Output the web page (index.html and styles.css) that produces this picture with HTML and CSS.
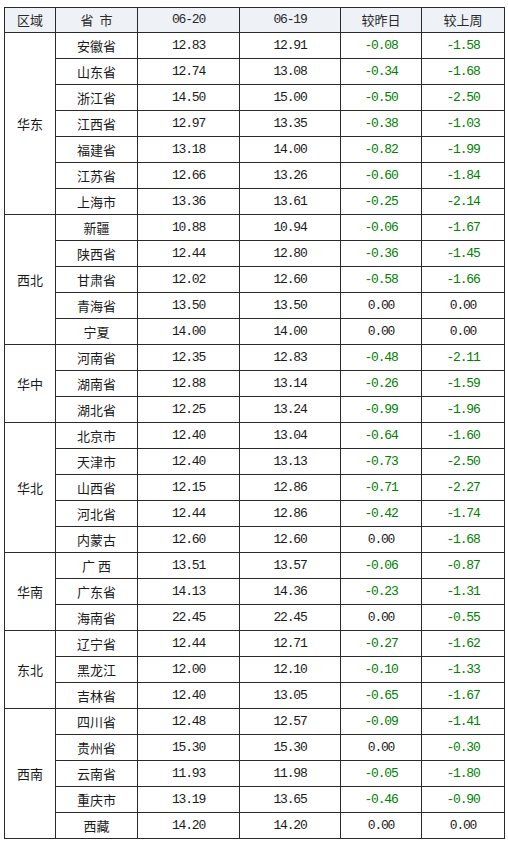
FILE: index.html
```html
<!DOCTYPE html>
<html lang="zh-CN">
<head>
<meta charset="utf-8">
<title>价格表</title>
<link rel="stylesheet" href="styles.css">
</head>
<body>
<table class="price">
<colgroup>
<col class="c-region"><col class="c-prov"><col class="c-d1"><col class="c-d2"><col class="c-ch1"><col class="c-ch2">
</colgroup>
<thead>
<tr><th>区域</th><th>省&nbsp;&nbsp;市</th><th class="num">06-20</th><th class="num">06-19</th><th>较昨日</th><th>较上周</th></tr>
</thead>
<tbody>
<tr><td rowspan="7" class="region">华东</td><td>安徽省</td><td class="num">12.83</td><td class="num">12.91</td><td class="num down">-0.08</td><td class="num down">-1.58</td></tr>
<tr><td>山东省</td><td class="num">12.74</td><td class="num">13.08</td><td class="num down">-0.34</td><td class="num down">-1.68</td></tr>
<tr><td>浙江省</td><td class="num">14.50</td><td class="num">15.00</td><td class="num down">-0.50</td><td class="num down">-2.50</td></tr>
<tr><td>江西省</td><td class="num">12.97</td><td class="num">13.35</td><td class="num down">-0.38</td><td class="num down">-1.03</td></tr>
<tr><td>福建省</td><td class="num">13.18</td><td class="num">14.00</td><td class="num down">-0.82</td><td class="num down">-1.99</td></tr>
<tr><td>江苏省</td><td class="num">12.66</td><td class="num">13.26</td><td class="num down">-0.60</td><td class="num down">-1.84</td></tr>
<tr><td>上海市</td><td class="num">13.36</td><td class="num">13.61</td><td class="num down">-0.25</td><td class="num down">-2.14</td></tr>

<tr><td rowspan="5" class="region">西北</td><td>新疆</td><td class="num">10.88</td><td class="num">10.94</td><td class="num down">-0.06</td><td class="num down">-1.67</td></tr>
<tr><td>陕西省</td><td class="num">12.44</td><td class="num">12.80</td><td class="num down">-0.36</td><td class="num down">-1.45</td></tr>
<tr><td>甘肃省</td><td class="num">12.02</td><td class="num">12.60</td><td class="num down">-0.58</td><td class="num down">-1.66</td></tr>
<tr><td>青海省</td><td class="num">13.50</td><td class="num">13.50</td><td class="num">0.00</td><td class="num">0.00</td></tr>
<tr><td>宁夏</td><td class="num">14.00</td><td class="num">14.00</td><td class="num">0.00</td><td class="num">0.00</td></tr>

<tr><td rowspan="3" class="region">华中</td><td>河南省</td><td class="num">12.35</td><td class="num">12.83</td><td class="num down">-0.48</td><td class="num down">-2.11</td></tr>
<tr><td>湖南省</td><td class="num">12.88</td><td class="num">13.14</td><td class="num down">-0.26</td><td class="num down">-1.59</td></tr>
<tr><td>湖北省</td><td class="num">12.25</td><td class="num">13.24</td><td class="num down">-0.99</td><td class="num down">-1.96</td></tr>

<tr><td rowspan="5" class="region">华北</td><td>北京市</td><td class="num">12.40</td><td class="num">13.04</td><td class="num down">-0.64</td><td class="num down">-1.60</td></tr>
<tr><td>天津市</td><td class="num">12.40</td><td class="num">13.13</td><td class="num down">-0.73</td><td class="num down">-2.50</td></tr>
<tr><td>山西省</td><td class="num">12.15</td><td class="num">12.86</td><td class="num down">-0.71</td><td class="num down">-2.27</td></tr>
<tr><td>河北省</td><td class="num">12.44</td><td class="num">12.86</td><td class="num down">-0.42</td><td class="num down">-1.74</td></tr>
<tr><td>内蒙古</td><td class="num">12.60</td><td class="num">12.60</td><td class="num">0.00</td><td class="num down">-1.68</td></tr>

<tr><td rowspan="3" class="region">华南</td><td>广&nbsp;西</td><td class="num">13.51</td><td class="num">13.57</td><td class="num down">-0.06</td><td class="num down">-0.87</td></tr>
<tr><td>广东省</td><td class="num">14.13</td><td class="num">14.36</td><td class="num down">-0.23</td><td class="num down">-1.31</td></tr>
<tr><td>海南省</td><td class="num">22.45</td><td class="num">22.45</td><td class="num">0.00</td><td class="num down">-0.55</td></tr>

<tr><td rowspan="3" class="region">东北</td><td>辽宁省</td><td class="num">12.44</td><td class="num">12.71</td><td class="num down">-0.27</td><td class="num down">-1.62</td></tr>
<tr><td>黑龙江</td><td class="num">12.00</td><td class="num">12.10</td><td class="num down">-0.10</td><td class="num down">-1.33</td></tr>
<tr><td>吉林省</td><td class="num">12.40</td><td class="num">13.05</td><td class="num down">-0.65</td><td class="num down">-1.67</td></tr>

<tr><td rowspan="5" class="region">西南</td><td>四川省</td><td class="num">12.48</td><td class="num">12.57</td><td class="num down">-0.09</td><td class="num down">-1.41</td></tr>
<tr><td>贵州省</td><td class="num">15.30</td><td class="num">15.30</td><td class="num">0.00</td><td class="num down">-0.30</td></tr>
<tr><td>云南省</td><td class="num">11.93</td><td class="num">11.98</td><td class="num down">-0.05</td><td class="num down">-1.80</td></tr>
<tr><td>重庆市</td><td class="num">13.19</td><td class="num">13.65</td><td class="num down">-0.46</td><td class="num down">-0.90</td></tr>
<tr><td>西藏</td><td class="num">14.20</td><td class="num">14.20</td><td class="num">0.00</td><td class="num">0.00</td></tr>
</tbody>
</table>
</body>
</html>
```
FILE: styles.css
```css
html, body {
  margin: 0;
  padding: 0;
  background: #ffffff;
}
body {
  padding: 7px 0 0 4px;
  font-family: "Noto Sans CJK SC", "Liberation Sans", sans-serif;
  font-size: 13px;
  color: #1a1a1a;
}
.price {
  border-collapse: collapse;
  table-layout: fixed;
  width: 500px;
}
.c-region { width: 51px; }
.c-prov { width: 82px; }
.c-d1 { width: 102px; }
.c-d2 { width: 101px; }
.c-ch1 { width: 81px; }
.c-ch2 { width: 83px; }

.price th,
.price td {
  border: 1px solid #2a2a2a;
  padding: 0;
  text-align: center;
  vertical-align: middle;
  font-weight: normal;
  line-height: 16px;
}
.price thead th {
  background: #eef1f6;
  color: #2a2a2a;
  height: 24px;
}
.price tbody td {
  height: 25px;
}
.num {
  font-family: "Liberation Mono", "DejaVu Sans Mono", monospace;
  font-size: 13px;
  letter-spacing: -1.2px;
}
.down {
  color: #008000;
}
```
